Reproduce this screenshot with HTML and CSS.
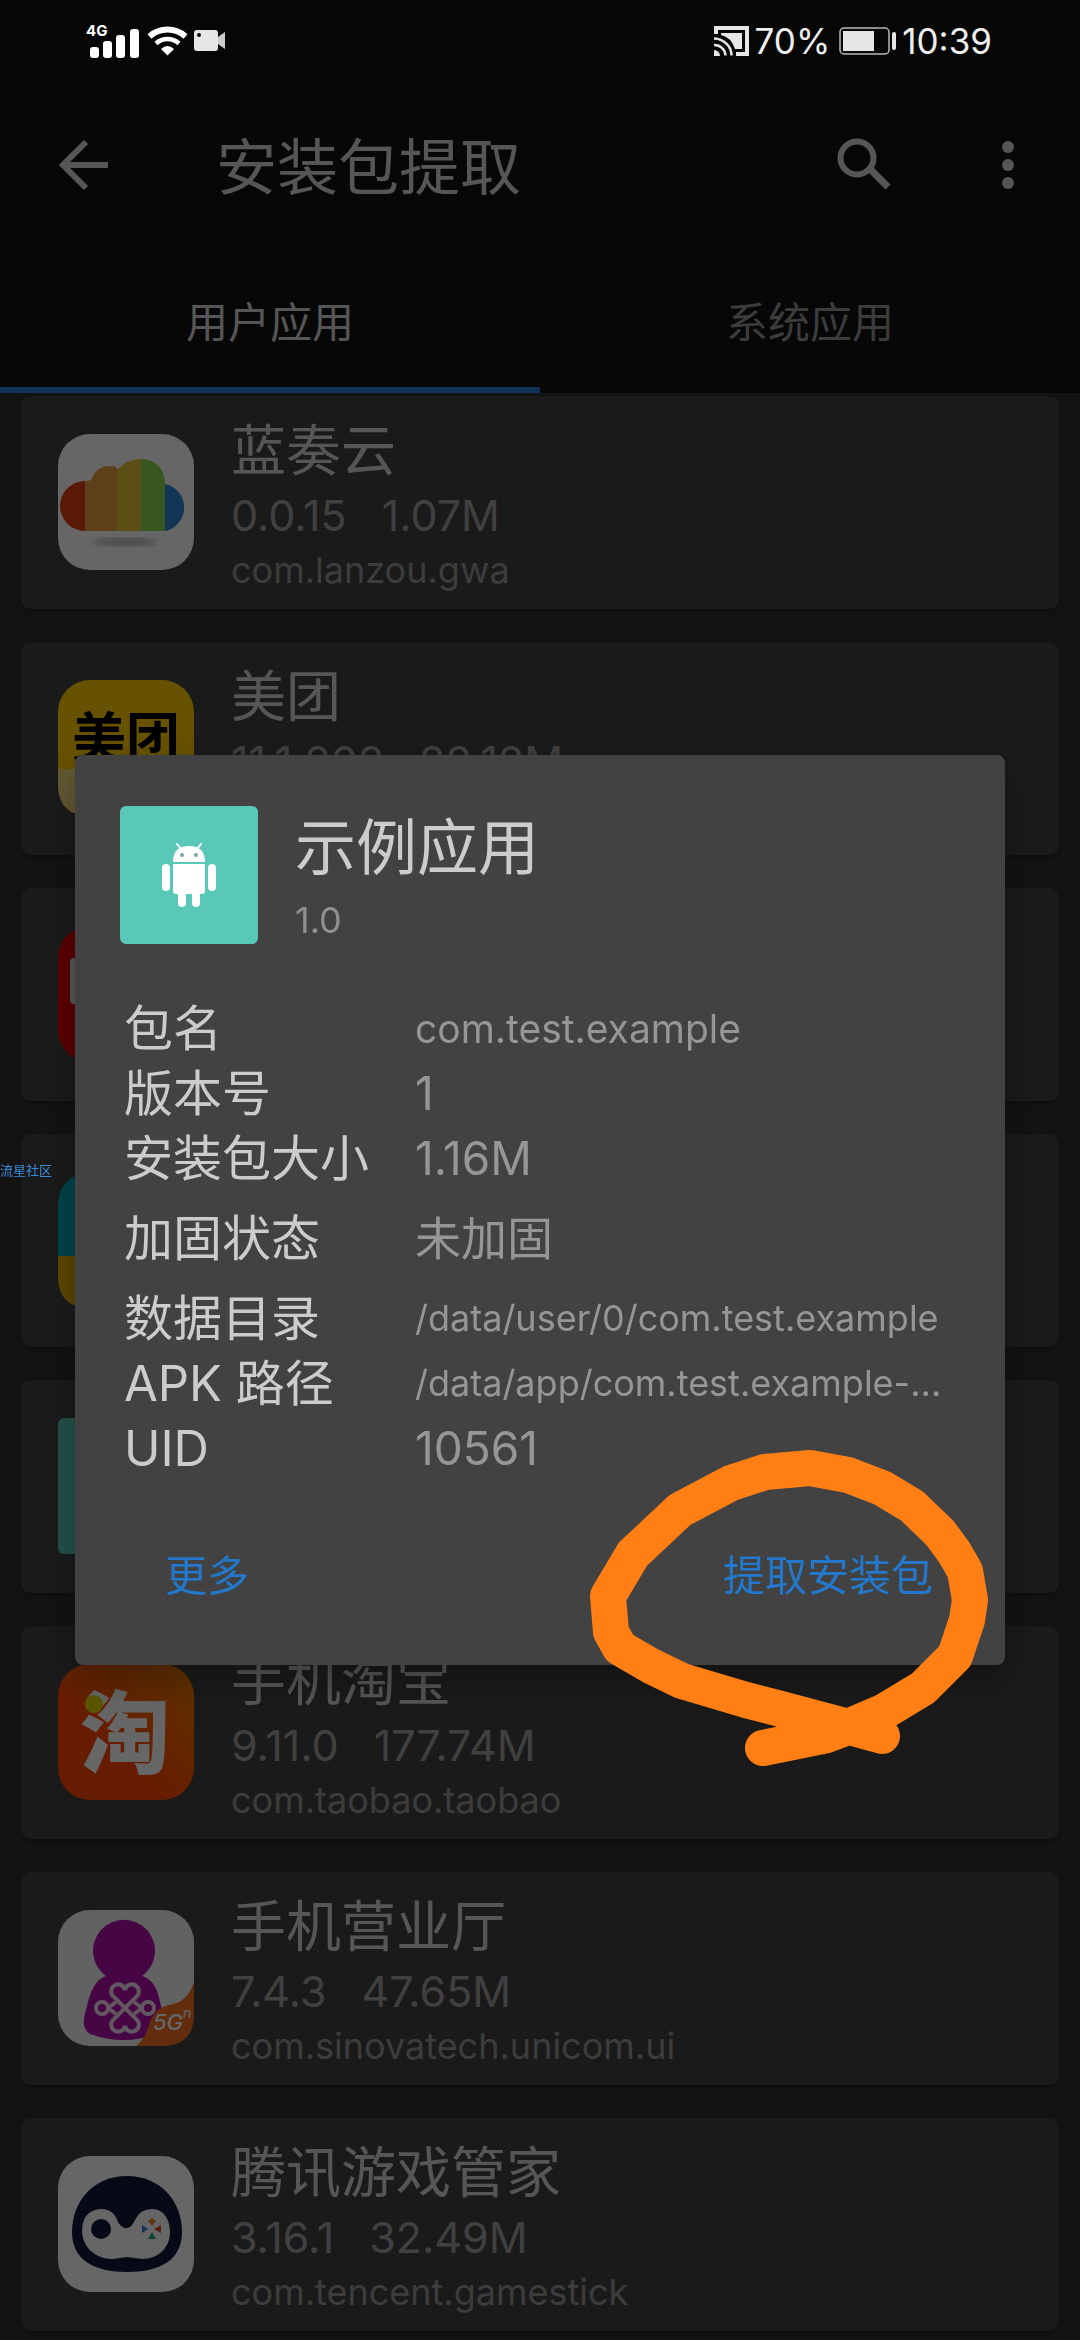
FILE: index.html
```html
<!DOCTYPE html>
<html lang="zh-CN">
	<head>
		<meta charset="UTF-8">
		<meta name="viewport" content="width=device-width, initial-scale=1.0">
		<title>安装包提取</title>
		<link rel="stylesheet" href="styles.css">
	</head>
	<body>

		<div class="status-bar">
			<div class="status-left">
				<svg class="signal" viewBox="0 0 56 36" fill="#fff">
					<text x="0" y="13" class="signal-text">4G</text>
					<rect x="4" y="24" width="9" height="11" rx="3"/>
					<rect x="17" y="18" width="9" height="17" rx="3"/>
					<rect x="30" y="12" width="9" height="23" rx="3"/>
					<rect x="44" y="6" width="9" height="29" rx="3"/>
				</svg>
				<svg class="wifi" viewBox="0 0 42 30" fill="none" stroke="#fff">
					<path d="M2.500 10.500A27 27 0 0 1 38.500 10.500" stroke-width="6"/>
					<path d="M9 17.500A17 17 0 0 1 32 17.500" stroke-width="4.500"/>
					<path d="M14 23Q20.500 17 27 23L20.500 29.500Z" fill="#fff" stroke="none"/>
				</svg>
				<svg class="camera" viewBox="0 0 32 22">
					<rect x="0" y="0" width="24" height="21" rx="3" fill="#e6e6e6"/>
					<circle cx="5" cy="5" r="2" fill="#070707"/>
					<path d="M24 7L31 2V19L24 14Z" fill="#ccc"/>
				</svg>
			</div>
			<div class="status-right">
				<svg class="cast" viewBox="0 0 36 30" fill="none" stroke="#e6e6e6">
					<path d="M2 8V2H33V28H22" stroke-width="4"/>
					<path d="M7 7H28V23H21Q17 11 7 9Z" fill="#e6e6e6" stroke="none"/>
					<path d="M0 12.500A18 17 0 0 1 17.500 29.500M0 19A11 11 0 0 1 11.500 29.500" stroke-width="2.500"/>
					<path d="M0 24A6 6 0 0 1 6 30H0Z" fill="#e6e6e6" stroke="none"/>
				</svg>
				<span>70%</span>
				<svg class="battery" viewBox="0 0 58 28">
					<rect x="1" y="1" width="49" height="26" rx="4" fill="none" stroke="#bbb" stroke-width="1.500"/>
					<rect x="4" y="4" width="31" height="20" fill="#e6e6e6"/>
					<rect x="53" y="5" width="4" height="18" rx="2" fill="#e6e6e6"/>
				</svg>
				<span>10:39</span>
			</div>
		</div>

		<header class="app-bar">
			<button class="icon-button" aria-label="返回">
				<svg viewBox="0 0 72 72" fill="none" stroke="currentColor" stroke-width="6">
					<path d="M60 36H16M38 13L15 36L38 59"/>
				</svg>
			</button>
			<h1 class="app-title">安装包提取</h1>
			<button class="icon-button search" aria-label="搜索">
				<svg viewBox="0 0 72 72" fill="none" stroke="currentColor">
					<circle cx="29" cy="29" r="16.500" stroke-width="6"/>
					<path d="M40 42L42 40L44 42L60 58" stroke-width="7"/>
				</svg>
			</button>
			<button class="icon-button" aria-label="更多选项">
				<svg viewBox="0 0 72 72" fill="currentColor">
					<circle cx="36" cy="18" r="6"/>
					<circle cx="36" cy="36" r="6"/>
					<circle cx="36" cy="54" r="6"/>
				</svg>
			</button>
		</header>

		<nav class="tabs">
			<button class="tab tab-active">用户应用</button>
			<button class="tab">系统应用</button>
		</nav>

		<main class="app-list">
			<article class="app-card">
				<svg class="app-icon" viewBox="0 0 136 136">
					<defs>
						<filter id="soft"><feGaussianBlur stdDeviation="3"/></filter>
					</defs>
					<rect width="136" height="136" rx="32" fill="#fff"/>
					<path d="M27 47V97A25 25 0 0 1 27 47Z" fill="#e04010"/>
					<path d="M27 47Q34 47 34 44Q39 32 52 32Q57 32 59 34V97H27Z" fill="#e8a040"/>
					<path d="M59 36Q68 25 83 25V97H59Z" fill="#e6c535"/>
					<path d="M83 25Q104 26 107 47V97H83Z" fill="#8ad850"/>
					<path d="M107 50A24 24 0 0 1 107 97Z" fill="#3088d8"/>
					<ellipse cx="67" cy="108" rx="32" ry="4" fill="#b4b4b4" filter="url(#soft)"/>
				</svg>
				<div class="app-text">
					<h2 class="app-name">蓝奏云</h2>
					<div class="app-meta"><span>0.0.15</span><span>1.07M</span></div>
					<div class="app-package">com.lanzou.gwa</div>
				</div>
			</article>

			<article class="app-card">
				<svg class="app-icon" viewBox="0 0 136 136">
					<rect width="136" height="136" rx="32" fill="#fc0"/>
					<path d="M0 89H136V104Q136 136 104 136H32Q0 136 0 104Z" fill="#f4dc80"/>
					<text x="14" y="78" class="meituan-text">美团</text>
				</svg>
				<div class="app-text">
					<h2 class="app-name">美团</h2>
					<div class="app-meta"><span>11.1.202</span><span>82.12M</span></div>
				</div>
			</article>

			<article class="app-card">
				<svg class="app-icon" viewBox="0 0 136 136">
					<rect width="136" height="136" rx="32" fill="#e60000"/>
					<rect x="12" y="32" width="112" height="46" rx="4" fill="#ddd"/>
				</svg>
			</article>

			<article class="app-card">
				<svg class="app-icon" viewBox="0 0 136 136">
					<rect width="136" height="136" rx="32" fill="#00a8b8"/>
					<path d="M0 84H136V104Q136 136 104 136H32Q0 136 0 104Z" fill="#e8b000"/>
				</svg>
			</article>

			<article class="app-card">
				<svg class="app-icon" viewBox="0 0 136 136">
					<rect width="136" height="136" rx="6" fill="#5ac8b8"/>
				</svg>
			</article>

			<article class="app-card">
				<svg class="app-icon" viewBox="0 0 136 136">
					<defs>
						<linearGradient id="taobao" x1="1" y1="0" x2="0" y2="1">
							<stop offset="0" stop-color="#f08000"/>
							<stop offset="0.6" stop-color="#ff4800"/>
						</linearGradient>
					</defs>
					<rect width="136" height="136" rx="32" fill="url(#taobao)"/>
					<text x="22" y="102" class="taobao-text">淘</text>
					<circle cx="36" cy="40" r="9" fill="#e6dc00"/>
				</svg>
				<div class="app-text">
					<h2 class="app-name">手机淘宝</h2>
					<div class="app-meta"><span>9.11.0</span><span>177.74M</span></div>
					<div class="app-package">com.taobao.taobao</div>
				</div>
			</article>

			<article class="app-card">
				<svg class="app-icon" viewBox="0 0 136 136">
					<rect width="136" height="136" rx="32" fill="#f4f4f4"/>
					<path d="M48 66A31 31 0 1 1 84 66Q98 70 102 92Q110 120 98 124Q66 136 32 124Q22 118 28 100Q34 70 48 66Z" fill="#b010a8"/>
					<g fill="none" stroke="#f4d8f0" stroke-width="4">
						<path d="M67 98L56 87A7 7 0 1 1 67 80A7 7 0 1 1 78 87L56 109A7 7 0 1 0 67 116A7 7 0 1 0 78 109Z"/>
						<circle cx="44" cy="98" r="6"/>
						<circle cx="90" cy="98" r="6"/>
						<path d="M50 98L58 92M50 98L58 104M84 98L76 92M84 98L76 104"/>
					</g>
					<path d="M136 72V104Q136 136 104 136H78Q88 128 92 112Q98 96 116 94Q130 90 136 72Z" fill="#f47020"/>
					<text x="95" y="120" class="unicom-text">5G</text>
					<text x="125" y="108" class="unicom-small">n</text>
				</svg>
				<div class="app-text">
					<h2 class="app-name">手机营业厅</h2>
					<div class="app-meta"><span>7.4.3</span><span>47.65M</span></div>
					<div class="app-package">com.sinovatech.unicom.ui</div>
				</div>
			</article>

			<article class="app-card">
				<svg class="app-icon" viewBox="0 0 136 136">
					<rect width="136" height="136" rx="32" fill="#fff"/>
					<path d="M69 20C103 20 124 46 124 76C124 104 102 116 69 116C36 116 14 104 14 76C14 46 35 20 69 20Z" fill="#101838"/>
					<path d="M43 53C54 53 58 60 60 66Q64 73 69 72Q74 71 77 64Q82 53 94 53C106 53 112 64 112 76C112 92 100 103 84 103Q76 102 69 101Q62 102 55 103C36 103 24 90 24 74Q25 54 43 53Z" fill="#fff"/>
					<circle cx="43" cy="73" r="10" fill="#101838"/>
					<path d="M90 65L94 62L98 65L94 70Z" fill="#f09030"/>
					<path d="M84 69L90 73L84 77Z" fill="#3080e0"/>
					<path d="M103 69L96 73L103 77Z" fill="#e04820"/>
					<path d="M94 76L98 83H90Z" fill="#20b080"/>
				</svg>
				<div class="app-text">
					<h2 class="app-name">腾讯游戏管家</h2>
					<div class="app-meta"><span>3.16.1</span><span>32.49M</span></div>
					<div class="app-package">com.tencent.gamestick</div>
				</div>
			</article>
		</main>

		<div class="scrim">
			<section class="dialog" role="dialog" aria-label="示例应用">
				<div class="dialog-header">
					<svg class="dialog-icon" viewBox="0 0 138 138">
						<rect width="138" height="138" rx="6" fill="#5ac8b8"/>
						<g fill="#fff">
							<path d="M53 56Q53 40 69 40Q85 40 85 56Z"/>
							<path d="M57 38L61 43M81 38L77 43" stroke="#fff" stroke-width="2" stroke-linecap="round"/>
							<path d="M53 58H85V85Q85 88 82 88H56Q53 88 53 85Z"/>
							<rect x="42" y="58" width="8" height="27" rx="4"/>
							<rect x="88" y="58" width="8" height="27" rx="4"/>
							<rect x="58" y="82" width="8" height="19" rx="4"/>
							<rect x="72" y="82" width="8" height="19" rx="4"/>
						</g>
						<circle cx="62" cy="49" r="2" fill="#7aa8a0"/>
						<circle cx="76" cy="49" r="2" fill="#7aa8a0"/>
					</svg>
					<div>
						<h2 class="dialog-title">示例应用</h2>
						<div class="dialog-version">1.0</div>
					</div>
				</div>

				<dl class="details">
					<dt>包名</dt><dd>com.test.example</dd>
					<dt>版本号</dt><dd class="large">1</dd>
					<dt>安装包大小</dt><dd class="large">1.16M</dd>
					<dt class="tall">加固状态</dt><dd class="large tall">未加固</dd>
					<dt>数据目录</dt><dd class="path">/data/user/0/com.test.example</dd>
					<dt>APK 路径</dt><dd class="path">/data/app/com.test.example-...</dd>
					<dt>UID</dt><dd class="large">10561</dd>
				</dl>

				<div class="dialog-actions">
					<button class="text-button">更多</button>
					<button class="text-button">提取安装包</button>
				</div>

				<!-- hand drawn ring around the extract button -->
				<svg class="ring" viewBox="0 170 445 330" fill="none" stroke="#ff7f14" stroke-width="36" stroke-linecap="round" stroke-linejoin="round">
					<path d="M322 456L289 447L217 428L186 420L122 401L91 386L60 368L51 352L48 316L73 274L120 230L171 203L205 192L250 188L288 195L322 208L352 226L380 253L394 272L405 291L410 320L407 340L395 376L363 408L325 431L283 449L267 455L203 468"/>
				</svg>
			</section>
		</div>

		<div class="watermark">流星社区</div>
	</body>
</html>
```
FILE: styles.css
```css
* {
	box-sizing: border-box;
}

body {
	margin: 0;
	min-height: 100vh;
	background-color: #303030;
	color: #d7d7d7;
	font-family: Inter, "Noto Sans CJK SC", sans-serif;
	overflow: hidden;
}

h1, h2, dl, dd {
	margin: 0;
	font-weight: normal;
}

button {
	border: 0;
	padding: 0;
	background: none;
	color: inherit;
	font-family: inherit;
}

svg {
	display: block;
	flex: none;
	overflow: visible;
}

/* status bar, stays above the scrim */
.status-bar {
	position: relative;
	z-index: 2;
	display: flex;
	justify-content: space-between;
	align-items: center;
	height: 82px;
	padding: 0 88px 0 86px;
	background-color: #070707;
	color: #eee;
	font-size: 35px;
}

.status-left, .status-right {
	display: flex;
	align-items: center;
}

.status-right {
	gap: 5px;
}

.signal {
	width: 56px;
	height: 36px;
}

.signal-text {
	font-size: 15px;
	font-weight: bold;
}

.wifi {
	width: 42px;
	height: 30px;
	margin-left: 5px;
}

.camera {
	width: 32px;
	height: 22px;
	margin-left: 5px;
}

.cast {
	width: 36px;
	height: 30px;
}

.battery {
	width: 58px;
	height: 28px;
	margin-left: 4px;
}

/* app bar */
.app-bar {
	display: flex;
	align-items: center;
	height: 166px;
	padding: 0 36px 0 48px;
	background-color: #121212;
}

.icon-button svg {
	width: 72px;
	height: 72px;
}

.search {
	margin-right: 72px;
}

.app-title {
	flex: 1;
	padding: 5px 0 0 96px;
	font-size: 61px;
	line-height: 72px;
}

.tabs {
	display: grid;
	grid-template-columns: 1fr 1fr;
	height: 145px;
	background-color: #121212;
}

.tab {
	padding-top: 4px;
	border-bottom: 6px solid transparent;
	color: #969696;
	font-size: 42px;
}

.tab-active {
	border-color: #267dd7;
	color: #d7d7d7;
}

/* list */
.app-list {
	display: flex;
	flex-direction: column;
	gap: 33px;
	padding: 3px 21px;
}

.app-card {
	display: flex;
	gap: 37px;
	height: 213px;
	padding: 19px 37px;
	background-color: #424242;
	border-radius: 10px;
	box-shadow: 0 2px 4px rgba(0, 0, 0, 0.3);
}

.app-icon {
	width: 136px;
	height: 136px;
	margin-top: 19px;
}

.app-name {
	font-size: 55px;
	line-height: 70px;
}

.app-meta {
	display: flex;
	gap: 35px;
	color: #a0a0a0;
	font-size: 43px;
	line-height: 60px;
}

.app-package {
	color: #969696;
	font-size: 36px;
	line-height: 50px;
}

.meituan-text {
	font-size: 54px;
	font-weight: bold;
}

.taobao-text {
	fill: #fff;
	font-size: 90px;
	font-weight: 900;
}

.unicom-text {
	fill: #fff;
	font-size: 22px;
	font-style: italic;
	font-weight: 500;
}

.unicom-small {
	fill: #fff;
	font-size: 14px;
	font-style: italic;
}

/* dialog */
.scrim {
	position: fixed;
	inset: 0;
	z-index: 1;
	display: flex;
	flex-direction: column;
	justify-content: center;
	padding: 80px 75px 0;
	background-color: rgba(0, 0, 0, 0.6);
}

.dialog {
	position: relative;
	padding: 51px 60px 45px 45px;
	background-color: #424242;
	border-radius: 8px;
	box-shadow: 0 16px 40px rgba(0, 0, 0, 0.3);
}

.dialog-header {
	display: flex;
	gap: 37px;
}

.dialog-icon {
	width: 138px;
	height: 138px;
}

.dialog-title {
	color: #ccc;
	font-size: 61px;
	line-height: 84px;
}

.dialog-version {
	color: #909090;
	font-size: 36px;
	line-height: 60px;
}

.details {
	display: grid;
	grid-template-columns: 295px 1fr;
	margin-top: 46px;
	color: #ccc;
	font-size: 49px;
	line-height: 65px;
}

.details dt {
	padding-left: 4px;
}

.details dd {
	color: #969696;
	font-size: 39px;
	white-space: nowrap;
}

.details .large {
	font-size: 46px;
}

.details .path {
	font-size: 36px;
}

.details .tall {
	line-height: 95px;
}

.dialog-actions {
	display: flex;
	justify-content: space-between;
	align-items: center;
	height: 96px;
	margin-top: 43px;
	padding: 0 12px 0 45px;
}

.text-button {
	color: #2478cc;
	font-size: 42px;
}

.ring {
	position: absolute;
	right: 0;
	bottom: -115px;
	width: 445px;
	height: 330px;
	pointer-events: none;
}

.watermark {
	position: fixed;
	top: 1160px;
	left: 0;
	z-index: 3;
	color: #3c8cdc;
	font-size: 13px;
}
```
